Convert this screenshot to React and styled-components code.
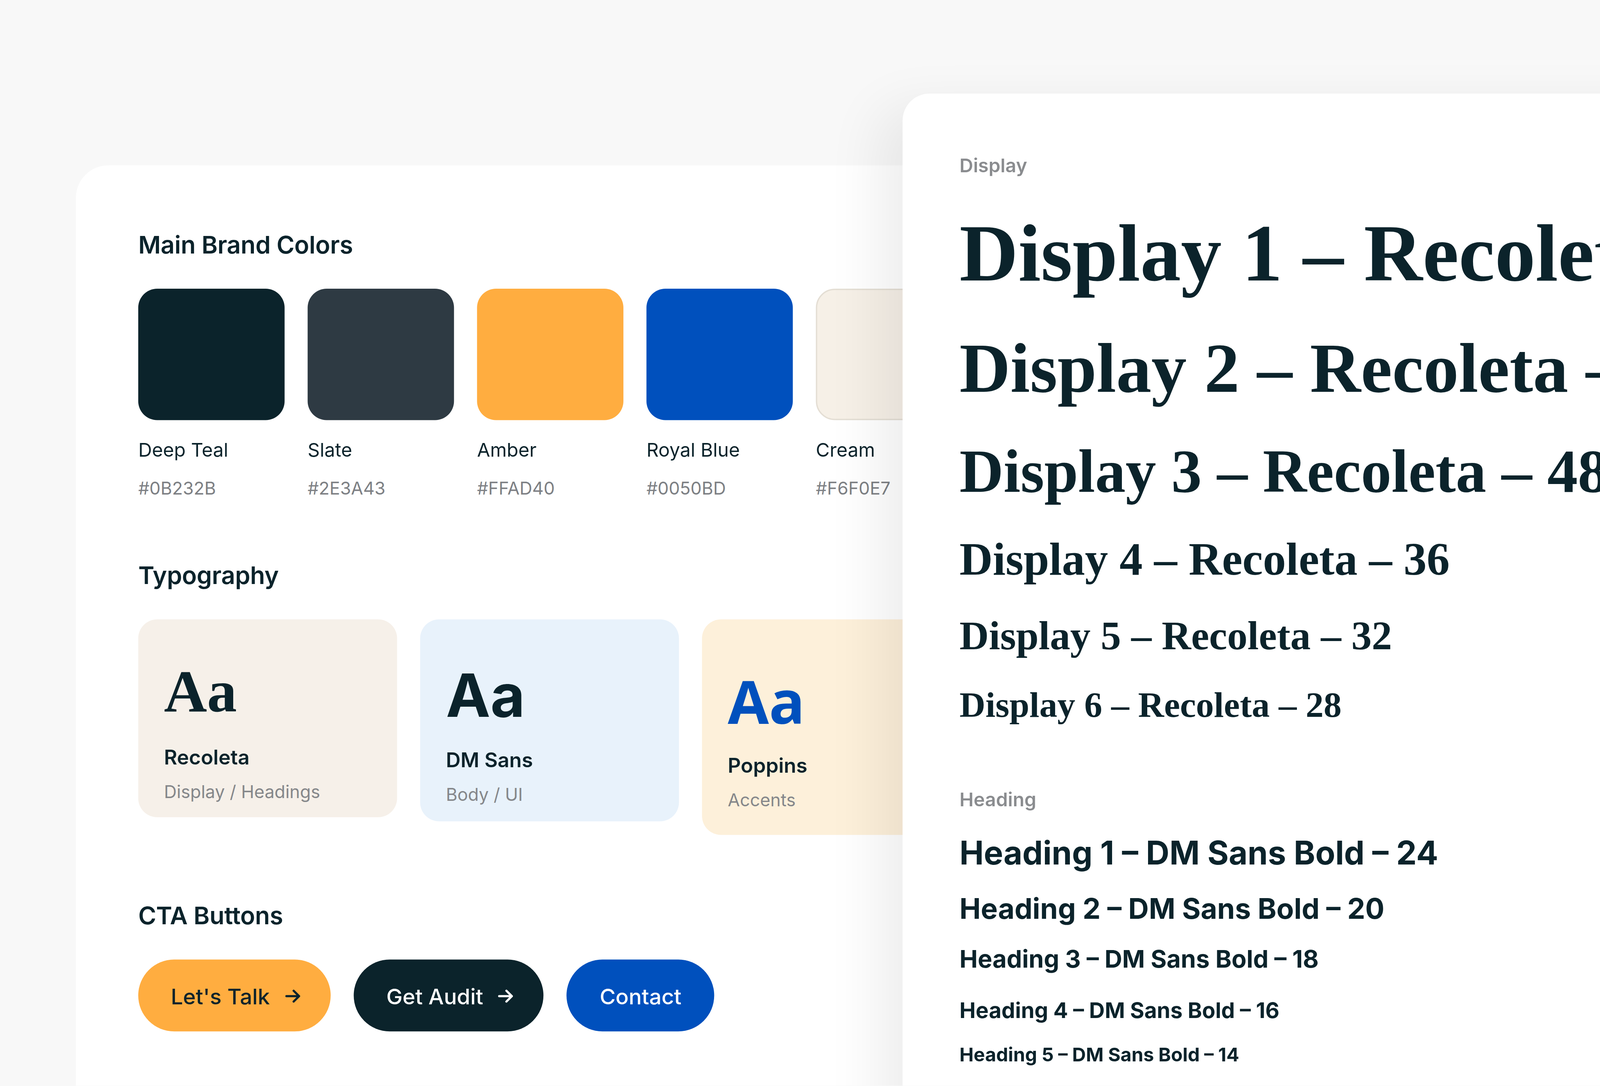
import React from 'react';
import styled, { createGlobalStyle } from 'styled-components';

const Global = createGlobalStyle`
  html, body { margin: 0; padding: 0; background: #f8f8f8; overflow: hidden; }
  body { font-family: Inter, "Noto Sans", sans-serif; color: #0b232b; }
`;

const Frame = styled.div`
  width: 5440px;
  height: 2780px;
  overflow: hidden;
  background: #f8f8f8;
`;

const Stage = styled.div`
  transform: scale(3.4694);
  transform-origin: 0 0;
  width: 1568px;
  height: 801px;
  position: relative;
  overflow: hidden;
  background: #f8f8f8;
`;

const LeftCard = styled.div`
  position: absolute;
  left: 56px;
  top: 122px;
  width: 700px;
  height: 720px;
  background: #fff;
  border-radius: 24px;
  padding: 48px 46px;
  box-sizing: border-box;
  display: flex;
  flex-direction: column;
`;

const RightCard = styled.div`
  position: absolute;
  left: 666px;
  top: 69px;
  width: 845px;
  height: 780px;
  background: #fff;
  border-radius: 20px;
  box-shadow: -18px 10px 40px rgba(0, 0, 0, 0.07);
  padding: 44px 42px;
  box-sizing: border-box;
  display: flex;
  flex-direction: column;
`;

const SectionTitle = styled.h3`
  margin: 0 0 22px;
  font-size: 18px;
  font-weight: 600;
  letter-spacing: -0.1px;
  color: #0b232b;
`;

const SwatchRow = styled.div`
  display: flex;
  gap: 17px;
  margin-bottom: 46px;
`;

const Swatch = styled.div`
  width: 108px;
`;

const Chip = styled.div`
  height: 97px;
  border-radius: 14px;
  background: ${p => p.$color};
  border: ${p => (p.$light ? '1px solid #e4ded4' : 'none')};
  box-sizing: border-box;
  margin-bottom: 13px;
`;

const SwatchName = styled.div`
  font-size: 14px;
  color: #0b232b;
  margin-bottom: 12px;
`;

const Hex = styled.div`
  font-size: 13px;
  color: #7d8084;
`;

const FontRow = styled.div`
  display: flex;
  gap: 17px;
  align-items: flex-start;
  margin-bottom: 49px;
`;

const FontCard = styled.div`
  width: 191px;
  height: ${p => p.$h}px;
  border-radius: 14px;
  background: ${p => p.$bg};
  padding: ${p => p.$pt}px 19px 0;
  box-sizing: border-box;
  flex-shrink: 0;
`;

const Glyph = styled.div`
  font-family: ${p => p.$font};
  font-weight: 700;
  font-size: 44px;
  line-height: 1;
  color: ${p => p.$color || '#0b232b'};
  margin-bottom: 16px;
`;

const FontName = styled.div`
  font-size: 15px;
  font-weight: 600;
  margin-bottom: 8px;
`;

const FontUse = styled.div`
  font-size: 13px;
  color: #85878a;
`;

const ButtonRow = styled.div`
  display: flex;
  gap: 17px;
`;

const Button = styled.div`
  height: 53px;
  padding: 0 ${p => (p.$arrow ? 20 : 24)}px 0 24px;
  border-radius: 27px;
  background: ${p => p.$bg};
  color: ${p => p.$fg};
  display: flex;
  align-items: center;
  gap: 9px;
  font-size: 16px;
  font-weight: 500;
`;

const Label = styled.div`
  font-size: 14px;
  font-weight: 600;
  color: #8a8c8f;
  margin-top: ${p => p.$mt || 0}px;
  margin-bottom: ${p => p.$mb}px;
`;

const Display = styled.div`
  font-family: "Liberation Serif", "DejaVu Serif", serif;
  font-weight: 700;
  font-size: ${p => p.$size}px;
  line-height: 1;
  color: #0b232b;
  white-space: nowrap;
  margin-bottom: ${p => p.$mb}px;
`;

const Heading = styled.div`
  font-weight: 700;
  font-size: ${p => p.$size}px;
  line-height: 1;
  color: #0b232b;
  white-space: nowrap;
  margin-bottom: ${p => p.$mb}px;
`;

const Arrow = ({ color }) => (
  <svg width="16" height="16" viewBox="0 0 24 24" fill="none" stroke={color} strokeWidth="2.4" strokeLinecap="round" strokeLinejoin="round">
    <path d="M5 12h14M13 6l6 6-6 6" />
  </svg>
);

const colors = [
  { name: 'Deep Teal', hex: '#0B232B', color: '#0b232b' },
  { name: 'Slate', hex: '#2E3A43', color: '#2e3a43' },
  { name: 'Amber', hex: '#FFAD40', color: '#ffad40' },
  { name: 'Royal Blue', hex: '#0050BD', color: '#0050bd' },
  { name: 'Cream', hex: '#F6F0E7', color: '#f6f0e7', light: true },
];

// [number, label size, rendered px, margin below]
const displays = [
  [1, 64, 60, 29], [2, 56, 52, 28], [3, 48, 45, 25], [4, 36, 34, 24], [5, 32, 30, 23], [6, 28, 26.5, 0],
];

const headings = [
  [1, 24, 24, 18], [2, 20, 21, 18], [3, 18, 18, 20], [4, 16, 16, 18], [5, 14, 14, 0],
];

export default function App() {
  return (
    <Frame>
      <Global />
      <Stage>
        <LeftCard>
          <SectionTitle>Main Brand Colors</SectionTitle>
          <SwatchRow>
            {colors.map(c => (
              <Swatch key={c.name}>
                <Chip $color={c.color} $light={c.light} />
                <SwatchName>{c.name}</SwatchName>
                <Hex>{c.hex}</Hex>
              </Swatch>
            ))}
          </SwatchRow>
          <SectionTitle>Typography</SectionTitle>
          <FontRow>
            <FontCard $bg="#f6f0e9" $h={146} $pt={32}>
              <Glyph $font='"Liberation Serif", serif'>Aa</Glyph>
              <FontName>Recoleta</FontName>
              <FontUse>Display / Headings</FontUse>
            </FontCard>
            <FontCard $bg="#e8f2fb" $h={149} $pt={34}>
              <Glyph $font='Inter, sans-serif'>Aa</Glyph>
              <FontName>DM Sans</FontName>
              <FontUse>Body / UI</FontUse>
            </FontCard>
            <FontCard $bg="#fdf0da" $h={159} $pt={38}>
              <Glyph $font='"Open Sans", sans-serif' $color="#0050bd">Aa</Glyph>
              <FontName>Poppins</FontName>
              <FontUse>Accents</FontUse>
            </FontCard>
          </FontRow>
          <SectionTitle>CTA Buttons</SectionTitle>
          <ButtonRow>
            <Button $bg="#ffad40" $fg="#0b232b" $arrow>Let's Talk <Arrow color="#0b232b" /></Button>
            <Button $bg="#0b232b" $fg="#fff" $arrow>Get Audit <Arrow color="#fff" /></Button>
            <Button $bg="#0050bd" $fg="#fff">Contact</Button>
          </ButtonRow>
        </LeftCard>
        <RightCard>
          <Label $mb={27}>Display</Label>
          {displays.map(([n, s, px, mb]) => (
            <Display key={n} $size={px} $mb={mb}>Display {n} – Recoleta – {s}</Display>
          ))}
          <Label $mt={47} $mb={20}>Heading</Label>
          {headings.map(([n, s, px, mb]) => (
            <Heading key={n} $size={px} $mb={mb}>Heading {n} – DM Sans Bold – {s}</Heading>
          ))}
        </RightCard>
      </Stage>
    </Frame>
  );
}
